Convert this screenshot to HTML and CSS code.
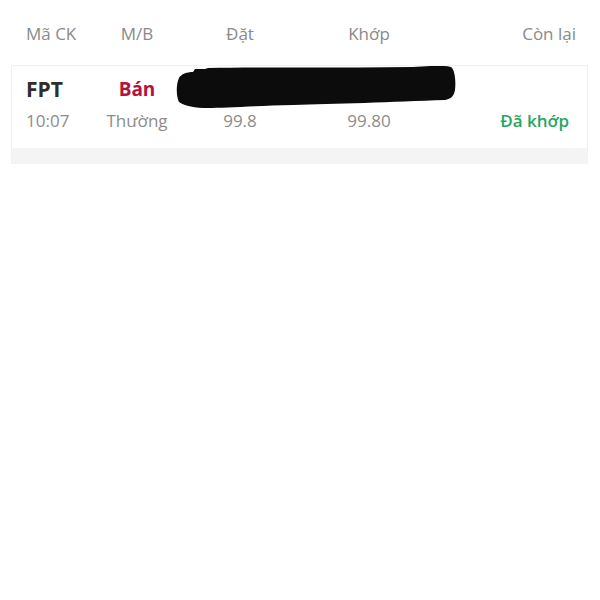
FILE: index.html
```html
<!DOCTYPE html>
<html>
<head>
  <meta charset="UTF-8">
  <title>Sổ lệnh</title>
  <link rel="stylesheet" href="styles.css">
</head>
<body>
  <div class="orders">
    <div class="cols head">
      <span>Mã CK</span>
      <span class="c">M/B</span>
      <span class="c">Đặt</span>
      <span class="c">Khớp</span>
      <span class="r">Còn lại</span>
    </div>

    <div class="card">
      <div class="cols top">
        <span class="sym">FPT</span>
        <span class="c sell">Bán</span>
        <span class="c"></span>
        <span class="c"></span>
        <span class="r"></span>
      </div>
      <div class="cols sub">
        <span>10:07</span>
        <span class="c">Thường</span>
        <span class="c">99.8</span>
        <span class="c">99.80</span>
        <span class="r done">Đã khớp</span>
      </div>
      <svg class="scribble" width="290" height="50" viewBox="0 0 290 50">
        <path d="M6 12 C8 8 14 6 20 6 L22 3 L32 3 L35 2 C90 1 170 2 240 1 C255 0 270 -1 278 1 C282 4 283 15 282 24 C281 30 278 33 272 34 C220 36 160 38 120 39 C80 40 50 42 35 42 C22 42 12 40 6 36 C3 30 3 18 6 12 Z" fill="#0c0c0c"/>
      </svg>
      <div class="foot"></div>
    </div>
  </div>
</body>
</html>
```

FILE: styles.css
```css
body {
  margin: 0;
  background: #fff;
  font-family: "Open Sans", sans-serif;
  color: #8c8c8c;
}
.orders {
  padding: 0 12px 0 11px;
}
.cols {
  display: grid;
  grid-template-columns: 64px 94px 112px 146px 1fr;
  font-size: 17px;
  line-height: 23px;
}
.cols .c {
  text-align: center;
}
.cols .r {
  text-align: right;
}
.head {
  padding: 22px 12px 20px 15px;
  color: #8a8a8a;
}
.card {
  position: relative;
  border: 1px solid #f1f1f1;
  border-bottom: none;
}
.card .cols {
  padding: 0 11px 0 14px;
}
.top {
  padding-top: 10px;
  line-height: 27px;
}
.card .top {
  padding-top: 10px;
}
.card .sub {
  margin-top: 6px;
  padding-bottom: 16px;
}
.sym {
  font-size: 21px;
  font-weight: 700;
  color: #2e2e2e;
}
.sell {
  font-size: 19px;
  font-weight: 700;
  color: #b3123c;
}
.done {
  font-weight: 600;
  color: #27a660;
  padding-right: 7px;
}
.foot {
  height: 16px;
  background: #f4f4f4;
}
.scribble {
  position: absolute;
  left: 161px;
  top: 0;
}
```
